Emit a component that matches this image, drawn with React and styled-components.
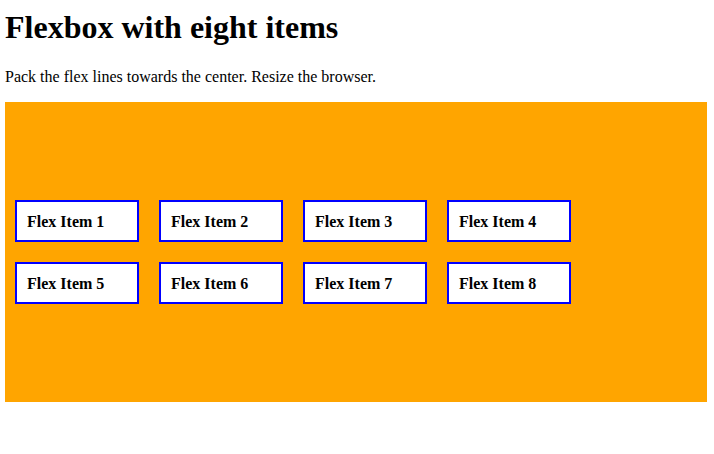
import React from "react";
import styled, { createGlobalStyle } from "styled-components";

const GlobalStyle = createGlobalStyle`
  body {
    margin: 0;
    font-family: "Liberation Serif", "Times New Roman", serif;
    background: #fff;
    color: #000;
  }
`;

const Page = styled.div`
  padding: 1px 7px 0 5px;
`;

const Title = styled.h1`
  font-size: 32px;
  font-weight: bold;
  margin: 8px 0 0;
  line-height: 37px;
`;

const Intro = styled.p`
  font-size: 16px;
  margin: 22px 0 0;
  line-height: 18px;
`;

const FlexContainer = styled.div`
  margin-top: 16px;
  height: 300px;
  background: orange;
  display: flex;
  flex-wrap: wrap;
  align-content: center;
`;

const FlexItem = styled.div`
  width: 100px;
  margin: 10px;
  padding: 11px 10px 9px;
  border: 2px solid blue;
  background: #fff;
  font-size: 16px;
  font-weight: bold;
  line-height: 18px;
`;

const items = [1, 2, 3, 4, 5, 6, 7, 8];

export default function App() {
  return (
    <Page>
      <GlobalStyle />
      <Title>Flexbox with eight items</Title>
      <Intro>Pack the flex lines towards the center. Resize the browser.</Intro>
      <FlexContainer>
        {items.map((n) => (
          <FlexItem key={n}>Flex Item {n}</FlexItem>
        ))}
      </FlexContainer>
    </Page>
  );
}
